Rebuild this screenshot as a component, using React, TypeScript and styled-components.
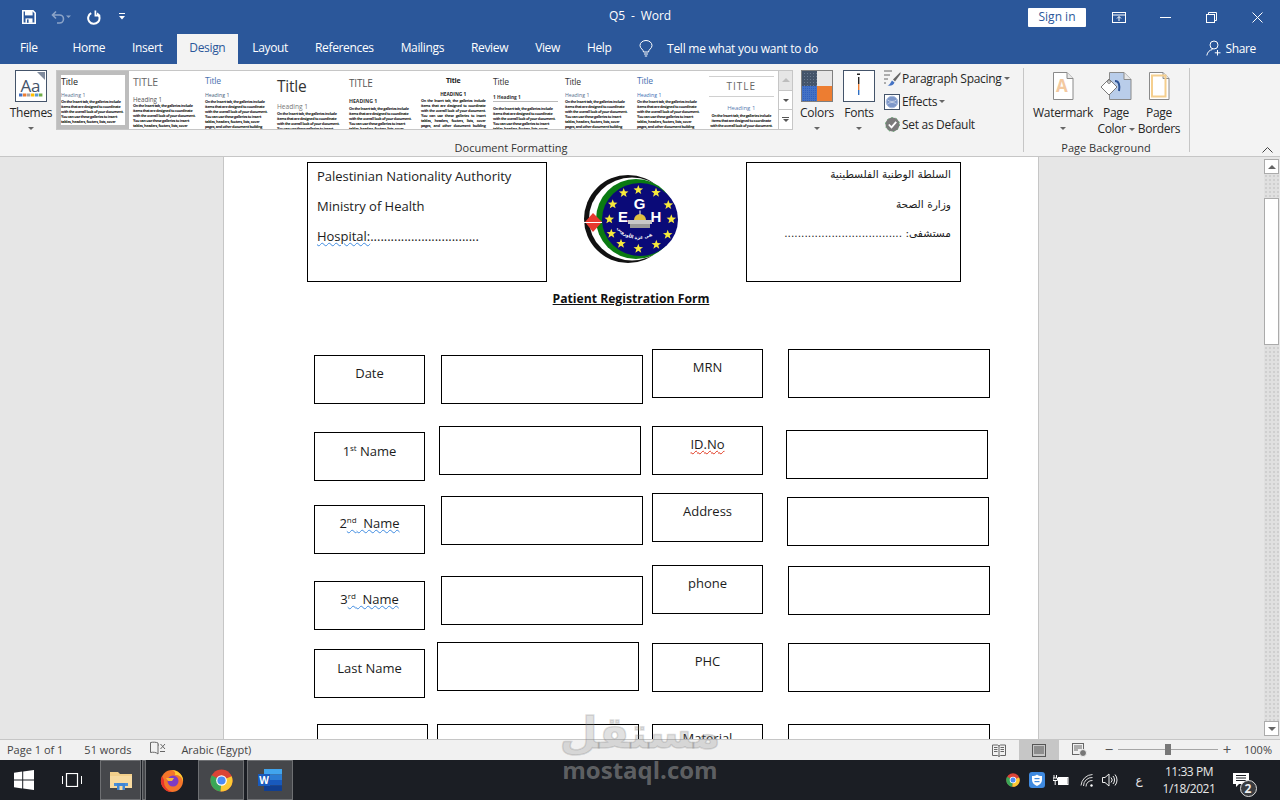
import React from "react";
import styled, { createGlobalStyle, css } from "styled-components";

const UI = `"Open Sans", "Noto Sans", sans-serif`;
const DOC = `"Open Sans", "Noto Sans", sans-serif`;
const AR = `"DejaVu Sans", sans-serif`;

const Global = createGlobalStyle`
  html, body { margin: 0; padding: 0; background: #fff; }
  body { font-family: ${UI}; }
  * { box-sizing: border-box; }
`;

const Root = styled.div`
  position: relative;
  width: 1280px;
  height: 800px;
  overflow: hidden;
  display: flex;
  flex-direction: column;
`;

/* ---------- title bar ---------- */
const TitleBar = styled.header`
  height: 34px;
  background: #2b579a;
  color: #fff;
  display: grid;
  grid-template-columns: 1fr auto 1fr;
  align-items: center;
`;
const QuickAccess = styled.div`
  display: flex;
  align-items: center;
  padding-left: 22px;
`;
const QuickIcon = styled.svg<{ $ml?: number; $dim?: boolean }>`
  display: block;
  margin-left: ${(p) => p.$ml ?? 0}px;
  opacity: ${(p) => (p.$dim ? 0.45 : 1)};
`;
const DocTitle = styled.div`
  font-size: 12px;
  letter-spacing: -0.1px;
  white-space: pre;
  padding: 0 0 3px 0;
`;
const WindowArea = styled.div`
  display: flex;
  justify-content: flex-end;
  align-items: center;
`;
const SignIn = styled.div`
  width: 58px;
  height: 19px;
  background: #fff;
  color: #2b579a;
  border-radius: 1px;
  font-size: 12px;
  line-height: 17px;
  text-align: center;
  margin-right: 10px;
`;
const WinButton = styled.div`
  width: 46px;
  height: 30px;
  display: flex;
  align-items: center;
  justify-content: center;
`;

/* ---------- tabs ---------- */
const TabRow = styled.nav`
  height: 30px;
  background: #2b579a;
  display: flex;
  align-items: stretch;
  padding-left: 6.5px;
  color: #fff;
`;
const Tab = styled.div<{ $active?: boolean; $file?: boolean }>`
  padding: 0 ${(p) => (p.$active ? 12.5 : 13.5)}px;
  margin-right: ${(p) => (p.$file ? 8 : 0)}px;
  font-size: 12px;
  letter-spacing: -0.35px;
  line-height: 28px;
  ${(p) =>
    p.$active &&
    css`
      background: #f3f3f3;
      color: #2b579a;
      margin: 0 1px;
    `}
`;
const TellMe = styled.div`
  display: flex;
  align-items: center;
  margin-left: 14px;
  padding-bottom: 2px;
  gap: 14px;
  font-size: 12px;
  letter-spacing: -0.25px;
`;
const ShareBox = styled.div`
  margin-left: auto;
  padding: 0 24px 2px 0;
  display: flex;
  align-items: center;
  gap: 3px;
  font-size: 12px;
  letter-spacing: -0.35px;
`;

/* ---------- ribbon ---------- */
const Ribbon = styled.section`
  height: 93px;
  background: #f3f3f3;
  border-bottom: 1px solid #c6c6c6;
  display: flex;
  color: #262626;
  font-size: 12px;
  letter-spacing: -0.3px;
`;
const Group = styled.div<{ $w: number }>`
  width: ${(p) => p.$w}px;
  height: 84px;
  margin-top: 4px;
  border-right: 1px solid #c6c6c6;
  display: flex;
  flex-direction: column;
`;
const GroupBody = styled.div<{ $pl: number }>`
  flex: 1;
  display: flex;
  padding: 2px 0 0 ${(p) => p.$pl}px;
`;
const GroupLabel = styled.div`
  text-align: center;
  font-size: 11px;
  letter-spacing: 0;
  line-height: 14px;
  margin-bottom: -3px;
  color: #333;
  padding-right: 1px;
`;
const BigButton = styled.div<{ $w: number; $ml?: number }>`
  width: ${(p) => p.$w}px;
  margin-left: ${(p) => p.$ml ?? 0}px;
  display: flex;
  flex-direction: column;
  align-items: center;
`;
const BigLabel = styled.div`
  margin-top: 3px;
  line-height: 16px;
  text-align: center;
  white-space: nowrap;
  & + & {
    margin-top: 0;
  }
`;
const Caret = styled.span<{ $color?: string }>`
  display: inline-block;
  width: 0;
  height: 0;
  border-left: 3px solid transparent;
  border-right: 3px solid transparent;
  border-top: 3px solid ${(p) => p.$color ?? "#666"};
  vertical-align: middle;
`;
const CaretLine = styled.div`
  height: 14px;
  display: flex;
  align-items: center;
  justify-content: center;
`;
const ThumbBox = styled.div`
  height: 32px;
  display: flex;
  align-items: center;
`;

const Gallery = styled.div`
  margin-left: 4px;
  width: 737px;
  height: 60px;
  background: #fff;
  border: 1px solid #c6c6c6;
  display: flex;
  overflow: hidden;
`;
const TileList = styled.div`
  flex: 1;
  display: flex;
  overflow: hidden;
`;
const Tile = styled.div<{ $sel?: boolean; $center?: boolean }>`
  flex: 0 0 72px;
  height: 58px;
  overflow: hidden;
  padding: 0 3.5px 0 4px;
  text-align: ${(p) => (p.$center ? "center" : "left")};
  color: #111;
  letter-spacing: 0;
  ${(p) =>
    p.$sel &&
    css`
      outline: 4px solid #bdbdbd;
      outline-offset: -4px;
      position: relative;
    `}
`;
const TileTitle = styled.div<{ $s: number; $c: string; $mt: number; $bold?: boolean; $spaced?: boolean; $ruled?: boolean }>`
  margin-top: ${(p) => p.$mt}px;
  font-size: ${(p) => p.$s}px;
  line-height: ${(p) => (p.$ruled ? 20 : p.$s >= 14 ? 18 : 10)}px;
  color: ${(p) => p.$c};
  font-weight: ${(p) => (p.$bold ? 700 : 400)};
  letter-spacing: ${(p) => (p.$spaced ? 1 : -0.2)}px;
  white-space: nowrap;
  ${(p) =>
    p.$ruled &&
    css`
      border-top: 1px solid #d0d0d0;
      border-bottom: 1px solid #d0d0d0;
      line-height: 19px;
    `}
`;
const TileHeading = styled.div<{ $s: number; $c: string; $mt: number; $bold?: boolean; $ruled?: boolean }>`
  margin-top: ${(p) => p.$mt}px;
  font-size: ${(p) => p.$s}px;
  line-height: 7px;
  color: ${(p) => p.$c};
  font-weight: ${(p) => (p.$bold ? 700 : 400)};
  white-space: nowrap;
  ${(p) => p.$ruled && `border-bottom: 1px solid #bbb;`}
`;
const TileBody = styled.div<{ $mt: number; $justify?: boolean }>`
  margin-top: ${(p) => p.$mt}px;
  font-size: 3.8px;
  letter-spacing: -0.33px;
  line-height: 5.1px;
  font-weight: 700;
  color: #111;
  text-align: ${(p) => (p.$justify ? "justify" : "inherit")};
`;
const GalleryScroll = styled.div`
  flex: 0 0 14px;
  display: flex;
  flex-direction: column;
  border-left: 1px solid #c6c6c6;
`;
const ScrollCell = styled.div<{ $off?: boolean }>`
  flex: 1;
  display: flex;
  flex-direction: column;
  gap: 1px;
  align-items: center;
  justify-content: center;
  background: ${(p) => (p.$off ? "#e6e6e6" : "#fff")};
  & + & {
    border-top: 1px solid #c6c6c6;
  }
`;
const UpCaret = styled.span`
  width: 0;
  height: 0;
  border-left: 4px solid transparent;
  border-right: 4px solid transparent;
  border-bottom: 4px solid #bdbdbd;
`;
const CaretBar = styled.span`
  width: 7px;
  height: 1px;
  background: #555;
`;
const OptionList = styled.div`
  margin: -3px 0 0 3px;
  display: flex;
  flex-direction: column;
`;
const OptionRow = styled.div`
  height: 23px;
  display: flex;
  align-items: center;
  gap: 2px;
  white-space: nowrap;
`;
const OptionIcon = styled.div`
  width: 18px;
  height: 18px;
  margin-right: -1px;
  display: flex;
  align-items: center;
  justify-content: center;
  flex: none;
`;
const CollapseArea = styled.div`
  flex: 1;
  display: flex;
  justify-content: flex-end;
  align-items: flex-end;
  padding: 0 7px 3px 0;
`;

/* ---------- document ---------- */
const DocArea = styled.main`
  height: 582px;
  background: #e6e6e6;
  display: grid;
  grid-template-columns: 223px 816px 1fr 17px;
  overflow: hidden;
`;
const Page = styled.div`
  grid-column: 2;
  position: relative;
  background: #fff;
  border-left: 1px solid #c6c6c6;
  border-right: 1px solid #c6c6c6;
  overflow: hidden;
  font-family: ${DOC};
  font-size: 13px;
  letter-spacing: -0.02px;
  color: #1c1c1c;
  padding-top: 134px;
`;
const FormTitle = styled.h1`
  margin: 0;
  text-align: center;
  font-size: 12.2px;
  line-height: 16px;
  font-weight: 700;
  text-decoration: underline;
  color: #111;
`;
const Floating = styled.div<{ $x: number; $y: number; $w: number; $h: number }>`
  position: absolute;
  left: ${(p) => p.$x - 224}px;
  top: ${(p) => p.$y - 157}px;
  width: ${(p) => p.$w}px;
  height: ${(p) => p.$h}px;
`;
const FormBox = styled(Floating)<{ $pt: number }>`
  border: 1px solid #000;
  text-align: center;
  line-height: 18px;
  padding-top: ${(p) => p.$pt}px;
`;
const HeaderLeft = styled(Floating)`
  border: 1px solid #000;
  padding: 4px 9px;
  line-height: 18px;
  display: flex;
  flex-direction: column;
  gap: 12px;
`;
const HeaderRight = styled(Floating)`
  border: 1px solid #000;
  padding: 2px 9px;
  direction: rtl;
  font-family: ${AR};
  font-size: 10.6px;
  letter-spacing: 0;
  line-height: 18px;
  display: flex;
  flex-direction: column;
  gap: 11.5px;
  white-space: nowrap;
`;
const LogoSlot = styled(Floating)``;
const Squiggle = styled.span<{ $red?: boolean }>`
  text-decoration: underline wavy ${(p) => (p.$red ? "#e0341c" : "#3f8be0")};
  text-decoration-thickness: 1px;
  text-underline-offset: 1px;
`;
const Sup = styled.sup`
  font-size: 8px;
  line-height: 0;
`;

/* ---------- scrollbar ---------- */
const ScrollBar = styled.div`
  grid-column: 4;
  display: flex;
  flex-direction: column;
  padding: 2px 1px 3px;
`;
const ScrollButton = styled.div`
  height: 15px;
  background: #fff;
  border: 1px solid #ababab;
  display: flex;
  align-items: center;
  justify-content: center;
  flex: none;
`;
const ScrollTrack = styled.div`
  flex: 1;
  padding-top: 24px;
  background-color: #e0e0e0;
  background-image: radial-gradient(#cfcfcf 1px, transparent 1px);
  background-size: 4px 4px;
`;
const ScrollThumb = styled.div`
  height: 147px;
  background: #fff;
  border: 1px solid #ababab;
`;
const Tri = styled.span<{ $down?: boolean }>`
  width: 0;
  height: 0;
  border-left: 4px solid transparent;
  border-right: 4px solid transparent;
  ${(p) => (p.$down ? "border-top" : "border-bottom")}: 4px solid #666;
`;

/* ---------- status bar ---------- */
const StatusBar = styled.footer`
  height: 21px;
  background: #f1f1f1;
  border-top: 1px solid #c6c6c6;
  display: flex;
  align-items: center;
  padding: 0 8px 2px 7px;
  font-size: 11px;
  letter-spacing: 0;
  color: #444;
`;
const StatusText = styled.span<{ $ml?: number }>`
  margin-left: ${(p) => p.$ml ?? 0}px;
  white-space: nowrap;
`;
const StatusRight = styled.div`
  margin-left: auto;
  height: 100%;
  display: flex;
  align-items: center;
`;
const ViewGroup = styled.div`
  height: 21px;
  margin: 0 4px -2px 0;
  display: flex;
`;
const ViewButton = styled.div<{ $on?: boolean; $w: number }>`
  width: ${(p) => p.$w}px;
  height: 100%;
  display: flex;
  align-items: center;
  justify-content: center;
  background: ${(p) => (p.$on ? "#c6c6c6" : "transparent")};
`;
const ZoomTrack = styled.div`
  position: relative;
  width: 100px;
  height: 1px;
  background: #a6a6a6;
  margin: 0 3px;
`;
const ZoomThumb = styled.div`
  position: absolute;
  left: 47px;
  top: -5px;
  width: 6px;
  height: 11px;
  background: #777;
`;
const ZoomMark = styled.div`
  width: 12px;
  text-align: center;
  font-size: 15px;
  line-height: 15px;
  color: #555;
`;

/* ---------- taskbar ---------- */
const Taskbar = styled.footer`
  height: 40px;
  background: #1b1e24;
  display: flex;
  align-items: stretch;
  color: #e8e8e8;
`;
const TaskSlot = styled.div<{ $w: number; $ml?: number; $active?: boolean }>`
  width: ${(p) => p.$w}px;
  margin-left: ${(p) => p.$ml ?? 0}px;
  display: flex;
  align-items: center;
  justify-content: center;
  ${(p) =>
    p.$active &&
    css`
      background: #45474b;
      border: 1px solid #6e7073;
    `}
`;
const Tray = styled.div`
  margin-left: auto;
  display: flex;
  align-items: center;
`;
const TrayIcon = styled.div<{ $w: number; $ml?: number }>`
  width: ${(p) => p.$w}px;
  margin-left: ${(p) => p.$ml ?? 0}px;
  height: 100%;
  display: flex;
  align-items: center;
  justify-content: center;
`;
const ImeGlyph = styled.div`
  width: 20px;
  margin-left: 11px;
  text-align: center;
  font-family: ${AR};
  font-size: 12px;
`;
const Clock = styled.div`
  width: 76px;
  margin-left: 2px;
  text-align: center;
  font-size: 12px;
  line-height: 17px;
  letter-spacing: -0.45px;
`;
const NotifyWrap = styled.div`
  position: relative;
  width: 45px;
  height: 40px;
  margin-right: 8px;
`;
const NotifyGlyph = styled.svg`
  position: absolute;
  left: 6px;
  top: 13px;
`;
const NotifyBadge = styled.div`
  position: absolute;
  left: 12.5px;
  top: 20px;
  width: 17px;
  height: 17px;
  border-radius: 50%;
  background: #3a3c40;
  border: 1px solid #dcdcdc;
  color: #eee;
  font-size: 12px;
  font-weight: 700;
  line-height: 15px;
  text-align: center;
`;

/* ---------- watermark ---------- */
const WatermarkLogo = styled.div`
  position: absolute;
  left: 523px;
  top: 701px;
  width: 234px;
  text-align: center;
  font-family: ${AR};
  font-weight: 700;
  font-size: 44px;
  line-height: 64px;
  color: rgba(120, 120, 120, 0.24);
  -webkit-text-stroke: 1.5px rgba(120, 120, 120, 0.24);
  pointer-events: none;
`;
const WatermarkText = styled.div`
  position: absolute;
  left: 523px;
  top: 754px;
  width: 234px;
  text-align: center;
  font-family: "Open Sans", sans-serif;
  font-weight: 700;
  font-size: 24px;
  line-height: 32px;
  color: rgba(190, 190, 190, 0.42);
  pointer-events: none;
`;

/* ---------- data ---------- */
const BODY =
  "On the Insert tab, the galleries include items that are designed to coordinate with the overall look of your document. You can use these galleries to insert tables, headers, footers, lists, cover pages, and other document building blocks.";

type T = {
  t: string; ts: number; tc: string; tm: number; tb?: boolean; sp?: boolean; tr?: boolean;
  h: string; hs: number; hc: string; hm: number; hb?: boolean; hr?: boolean;
  bm: number; sel?: boolean; center?: boolean; just?: boolean; ct?: boolean;
};
const tiles: T[] = [
  { t: "Title", ts: 9, tc: "#222", tm: 6, h: "Heading 1", hs: 5.2, hc: "#5a6f8f", hm: 4.5, bm: 0, sel: true },
  { t: "TITLE", ts: 10.5, tc: "#666", tm: 6, h: "Heading 1", hs: 6.2, hc: "#555", hm: 8.5, bm: 0 },
  { t: "Title", ts: 8.6, tc: "#4a72b0", tm: 5, h: "Heading 1", hs: 5.2, hc: "#4a5f80", hm: 5.5, bm: 0 },
  { t: "Title", ts: 15.5, tc: "#333", tm: 6, h: "Heading 1", hs: 6.6, hc: "#777", hm: 7.5, bm: 1 },
  { t: "TITLE", ts: 10, tc: "#555", tm: 7, h: "HEADING 1", hs: 5.2, hc: "#333", hm: 9.5, hb: true, bm: 1 },
  { t: "Title", ts: 7, tc: "#222", tm: 5, tb: true, ct: true, h: "HEADING 1", hs: 4.8, hc: "#222", hm: 4.5, hb: true, bm: 0, just: true },
  { t: "Title", ts: 8.6, tc: "#333", tm: 6, h: "1   Heading 1", hs: 4.8, hc: "#333", hm: 6.5, hb: true, hr: true, bm: 4 },
  { t: "Title", ts: 8.6, tc: "#333", tm: 6, h: "Heading 1", hs: 5.2, hc: "#5a6f8f", hm: 4.5, bm: 0 },
  { t: "Title", ts: 8.6, tc: "#4a72b0", tm: 5, h: "Heading 1", hs: 5.2, hc: "#3f6fb5", hm: 5.5, bm: 0 },
  { t: "TITLE", ts: 10, tc: "#666", tm: 5, sp: true, tr: true, h: "Heading 1", hs: 6, hc: "#5b7db1", hm: 7.5, bm: 1, center: true },
];

type B = { x: number; y: number; w?: number; pt?: number; label?: React.ReactNode };
const fw = 111;
const bw = 202;
const boxes: B[] = [
  { x: 314, y: 355, w: fw, label: "Date" },
  { x: 441, y: 355 },
  { x: 652, y: 349, w: fw, label: "MRN" },
  { x: 788, y: 349 },
  { x: 314, y: 432, w: fw, pt: 9, label: <>1<Sup>st</Sup> Name</> },
  { x: 439, y: 426 },
  { x: 652, y: 426, w: fw, label: <Squiggle $red>ID.No</Squiggle> },
  { x: 786, y: 430 },
  { x: 314, y: 505, w: fw, label: <>2<Squiggle><Sup>nd</Sup>&nbsp; Name</Squiggle></> },
  { x: 441, y: 496 },
  { x: 652, y: 493, w: fw, label: "Address" },
  { x: 787, y: 497 },
  { x: 314, y: 581, w: fw, label: <>3<Squiggle><Sup>rd</Sup>&nbsp; Name</Squiggle></> },
  { x: 441, y: 576 },
  { x: 652, y: 565, w: fw, label: "phone" },
  { x: 788, y: 566 },
  { x: 314, y: 649, w: fw, pt: 9, label: "Last Name" },
  { x: 437, y: 642 },
  { x: 652, y: 643, w: fw, label: "PHC" },
  { x: 788, y: 643 },
  { x: 317, y: 724, w: fw },
  { x: 437, y: 724 },
  { x: 652, y: 724, w: fw, pt: 4, label: "Material" },
  { x: 788, y: 724 },
];

/* ---------- drawings ---------- */
const DocShape = ({ children }: { children?: React.ReactNode }) => (
  <>
    <path d="M1.5 .5H15L21 6.5V27.5H1.5Z" fill="#fff" stroke="#8a8a8a" />
    <path d="M15 .5V6.5H21" fill="#e8e8e8" stroke="#8a8a8a" />
    {children}
  </>
);

const ChromeIcon = ({ size }: { size: number }) => (
  <svg width={size} height={size} viewBox="0 0 24 24">
    <circle cx="12" cy="12" r="11.5" fill="#db4437" />
    <path d="M12 12L1.8 6.5A11.5 11.5 0 0 0 11 23.5Z" fill="#3aa757" />
    <path d="M12 12L22.6 7.5A11.5 11.5 0 0 1 11 23.5Z" fill="#fcc934" />
    <circle cx="12" cy="12" r="5.6" fill="#fff" />
    <circle cx="12" cy="12" r="4.3" fill="#4c8bf5" />
  </svg>
);

const star = (cx: number, cy: number, r: number) => {
  const pts: string[] = [];
  for (let i = 0; i < 10; i++) {
    const a = -Math.PI / 2 + (i * Math.PI) / 5;
    const rr = i % 2 ? r * 0.42 : r;
    pts.push(`${(cx + rr * Math.cos(a)).toFixed(2)},${(cy + rr * Math.sin(a)).toFixed(2)}`);
  }
  return pts.join(" ");
};
const starSpots = [
  [98.3, 30], [116, 32.7], [128.3, 45], [131.3, 59.3], [127.7, 74.7], [116.3, 84.7],
  [98.3, 88.7], [81, 83.7], [71.3, 73.7], [69.3, 59.3], [72.7, 44.3], [83.7, 33],
];

const Logo = () => (
  <svg width="180" height="115" viewBox="0 0 180 115">
    <ellipse cx="88" cy="59" rx="44" ry="44" fill="#111" />
    <ellipse cx="92" cy="59" rx="43" ry="41.5" fill="#fff" />
    <ellipse cx="96" cy="59" rx="40" ry="40" fill="#0a7a12" />
    <ellipse cx="100" cy="59.5" rx="38" ry="36.5" fill="#0a0a78" />
    <path d="M53 53L62 62L53 72L45 62Z" fill="#e8392f" />
    <rect x="44" y="62" width="18" height="1" fill="#fff" />
    {starSpots.map(([x, y], i) => (
      <polygon key={i} points={star(x, y, 5)} fill="#f7e93c" />
    ))}
    <text x="99.5" y="49" textAnchor="middle" fontFamily="Liberation Sans, sans-serif" fontWeight="700" fontSize="15" fill="#fff">G</text>
    <text x="83" y="62" textAnchor="middle" fontFamily="Liberation Sans, sans-serif" fontWeight="700" fontSize="15" fill="#fff">E</text>
    <text x="116" y="62" textAnchor="middle" fontFamily="Liberation Sans, sans-serif" fontWeight="700" fontSize="15" fill="#fff">H</text>
    <path d="M94 60a6 6 0 0 1 12 0Z" fill="#e0c040" />
    <rect x="99.4" y="50.5" width="1.2" height="4" fill="#ddd" />
    <rect x="88" y="60" width="24" height="4" fill="#c8c8c8" />
    <rect x="90" y="64" width="20" height="4" fill="#9a9a9a" />
    <path id="egh-arc" d="M76 67Q90 86 114 75" fill="none" />
    <text fontFamily={AR} fontSize="4.6" fill="#fff" fontWeight="700">
      <textPath href="#egh-arc" startOffset="3%">مستشفى غزة الأوروبي</textPath>
    </text>
  </svg>
);

const WinLogo = () => (
  <svg width="20" height="20" viewBox="0 0 20 20" fill="#fff">
    <path d="M0 2.8L8.2 1.6V9.4H0ZM9.2 1.5L20 0V9.4H9.2ZM0 10.4H8.2V18.4L0 17.2ZM9.2 10.4H20V20L9.2 18.5Z" />
  </svg>
);

export default function App() {
  return (
    <Root>
      <Global />
      <TitleBar>
        <QuickAccess>
          <QuickIcon width="14" height="14" viewBox="0 0 14 14" fill="none">
            <path d="M.8.8H11L13.2 3V13.2H.8Z" stroke="#fff" strokeWidth="1.6" />
            <rect x="3" y="1" width="7.6" height="4.4" fill="#fff" />
            <rect x="3.5" y="8.4" width="7" height="4.4" fill="#fff" />
            <rect x="5" y="9.4" width="1.6" height="3.4" fill="#2b579a" />
          </QuickIcon>
          <QuickIcon $ml={15} $dim width="20" height="14" viewBox="0 0 20 14" fill="none">
            <path d="M5 1.5L1.5 5L5 8.5M1.5 5H8.5A4 4 0 0 1 8.5 13H6" stroke="#fff" strokeWidth="1.6" />
            <path d="M15 5.5h5l-2.5 2.5Z" fill="#fff" />
          </QuickIcon>
          <QuickIcon $ml={16} width="14" height="15" viewBox="0 0 14 15" fill="none">
            <path d="M4.2 3.1A5.7 5.7 0 1 0 10 3.4" stroke="#fff" strokeWidth="2" />
            <path d="M8.4.4V5.6H13.2" stroke="#fff" strokeWidth="1.7" fill="none" />
          </QuickIcon>
          <QuickIcon $ml={17} width="8" height="8" viewBox="0 0 8 8">
            <rect x="1" y="0" width="6" height="1" fill="#fff" />
            <path d="M1 3H7L4 6.5Z" fill="#fff" />
          </QuickIcon>
        </QuickAccess>
        <DocTitle>Q5  -  Word</DocTitle>
        <WindowArea>
          <SignIn>Sign in</SignIn>
          <WinButton>
            <svg width="14" height="11" viewBox="0 0 14 11" fill="none" stroke="#fff">
              <rect x=".5" y=".5" width="13" height="10" />
              <path d="M.5 3H13.5" />
              <path d="M7 9V4.5M5 6.5L7 4.5L9 6.5" />
            </svg>
          </WinButton>
          <WinButton>
            <svg width="11" height="1" viewBox="0 0 11 1"><rect width="11" height="1" fill="#fff" /></svg>
          </WinButton>
          <WinButton>
            <svg width="11" height="11" viewBox="0 0 11 11" fill="none" stroke="#fff">
              <rect x=".5" y="2.5" width="8" height="8" />
              <path d="M2.5 2.5V.5H10.5V8.5H8.5" />
            </svg>
          </WinButton>
          <WinButton>
            <svg width="11" height="11" viewBox="0 0 11 11" fill="none" stroke="#fff">
              <path d="M.5.5L10.5 10.5M10.5.5L.5 10.5" />
            </svg>
          </WinButton>
        </WindowArea>
      </TitleBar>

      <TabRow>
        <Tab $file>File</Tab>
        <Tab>Home</Tab>
        <Tab>Insert</Tab>
        <Tab $active>Design</Tab>
        <Tab>Layout</Tab>
        <Tab>References</Tab>
        <Tab>Mailings</Tab>
        <Tab>Review</Tab>
        <Tab>View</Tab>
        <Tab>Help</Tab>
        <TellMe>
          <svg width="14" height="17" viewBox="0 0 14 17" fill="none" stroke="#fff">
            <path d="M4.5 12C4.5 9.5 1 8.5 1 5.5A6 5 0 0 1 13 5.5C13 8.5 9.5 9.5 9.5 12Z" />
            <path d="M5 14H9M5.8 16H8.2" />
          </svg>
          Tell me what you want to do
        </TellMe>
        <ShareBox>
          <svg width="16" height="16" viewBox="0 0 16 16" fill="none" stroke="#fff">
            <circle cx="8" cy="5" r="4" />
            <path d="M.8 15.5C1.5 12 3.5 10 6.5 9.5M11.5 10V15.5M8.8 12.8H14.5" />
          </svg>
          Share
        </ShareBox>
      </TabRow>

      <Ribbon>
        <Group $w={1024}>
          <GroupBody $pl={10}>
            <BigButton $w={42}>
              <svg width="32" height="32" viewBox="0 0 32 32">
                <rect x=".5" y=".5" width="31" height="31" fill="#fff" stroke="#44546a" />
                <path d="M22 2H30V10Z" fill="#7f8a9c" />
                <text x="5.5" y="21.5" fontFamily="Open Sans, sans-serif" fontSize="17" fill="#44546a">Aa</text>
                {["#4472c4", "#ed7d31", "#a5a5a5", "#ffc000", "#5b9bd5", "#70ad47"].map((c, i) => (
                  <rect key={c} x={4 + i * 4} y="23.5" width="3.4" height="3" fill={c} />
                ))}
              </svg>
              <BigLabel>Themes</BigLabel>
              <CaretLine><Caret /></CaretLine>
            </BigButton>
            <Gallery>
              <TileList>
                {tiles.map((t, i) => (
                  <Tile key={i} $sel={t.sel} $center={t.center || t.ct}>
                    <TileTitle $s={t.ts} $c={t.tc} $mt={t.tm} $bold={t.tb} $spaced={t.sp} $ruled={t.tr}>{t.t}</TileTitle>
                    <TileHeading $s={t.hs} $c={t.hc} $mt={t.hm} $bold={t.hb} $ruled={t.hr}>{t.h}</TileHeading>
                    <TileBody $mt={t.bm} $justify={t.just}>{BODY}</TileBody>
                  </Tile>
                ))}
              </TileList>
              <GalleryScroll>
                <ScrollCell $off><UpCaret /></ScrollCell>
                <ScrollCell><Caret $color="#555" /></ScrollCell>
                <ScrollCell><CaretBar /><Caret $color="#555" /></ScrollCell>
              </GalleryScroll>
            </Gallery>
            <BigButton $w={42} $ml={3}>
              <ThumbBox>
                <svg width="32" height="32" viewBox="0 0 32 32">
                  <defs>
                    <pattern id="dotDark" width="3" height="3" patternUnits="userSpaceOnUse">
                      <rect width="3" height="3" fill="#44546a" />
                      <rect width="1" height="1" fill="#6b7a90" />
                    </pattern>
                    <pattern id="dotBlue" width="2" height="2" patternUnits="userSpaceOnUse">
                      <rect width="2" height="2" fill="#4472c4" />
                      <rect width="1" height="1" fill="#2f5fc0" />
                    </pattern>
                  </defs>
                  <rect width="16" height="16" fill="url(#dotDark)" />
                  <rect x="16" width="16" height="16" fill="#e7e6e6" />
                  <rect y="16" width="16" height="16" fill="url(#dotBlue)" />
                  <rect x="16" y="16" width="16" height="16" fill="#ed7d31" />
                  <rect x=".5" y=".5" width="31" height="31" fill="none" stroke="#7f7f7f" />
                </svg>
              </ThumbBox>
              <BigLabel>Colors</BigLabel>
              <CaretLine><Caret /></CaretLine>
            </BigButton>
            <BigButton $w={42}>
              <ThumbBox>
                <svg width="32" height="32" viewBox="0 0 32 32">
                  <rect x=".5" y=".5" width="31" height="31" fill="#fff" stroke="#44546a" />
                  <path d="M14 3.5H17V5H14Z" fill="#222" />
                  <rect x="15" y="7" width="1.4" height="7" fill="#222" />
                  <rect x="15" y="14" width="1.4" height="6" fill="#ed7d31" />
                  <rect x="15" y="20" width="1.4" height="5" fill="#2f6fc4" />
                </svg>
              </ThumbBox>
              <BigLabel>Fonts</BigLabel>
              <CaretLine><Caret /></CaretLine>
            </BigButton>
            <OptionList>
              <OptionRow>
                <OptionIcon>
                  <svg width="17" height="17" viewBox="0 0 17 17" fill="none">
                    <path d="M0 1H8M0 5H6M0 9H4M0 13H2" stroke="#666" />
                    <path d="M16.5 2L9 9.5L11 11.5L16.5 4Z" fill="#666" />
                    <path d="M8 10.5L10.5 12.5C9.5 15.5 6.5 16 3.5 15.5C6 15 6.5 12.5 8 10.5Z" fill="#4472c4" />
                  </svg>
                </OptionIcon>
                <span>Paragraph Spacing</span>
                <Caret />
              </OptionRow>
              <OptionRow>
                <OptionIcon>
                  <svg width="16" height="16" viewBox="0 0 16 16">
                    <rect x=".5" y=".5" width="15" height="15" fill="#fff" stroke="#44546a" />
                    <circle cx="8" cy="8" r="5.8" fill="#7d97c9" stroke="#a9bbdc" />
                    <path d="M3.5 6C6 8 10 8 12.5 6M3.5 10C6 8 10 8 12.5 10" stroke="#c3cfe6" fill="none" />
                  </svg>
                </OptionIcon>
                <span>Effects</span>
                <Caret />
              </OptionRow>
              <OptionRow>
                <OptionIcon>
                  <svg width="15" height="15" viewBox="0 0 15 15">
                    <circle cx="7.5" cy="7.5" r="7" fill="#7a7a7a" />
                    <circle cx="7.5" cy="7.5" r="7" fill="none" stroke="#5aa469" strokeDasharray="1.5 3" />
                    <path d="M3.8 7.5L6.5 10.4L11.2 4.8" stroke="#fff" strokeWidth="1.8" fill="none" />
                  </svg>
                </OptionIcon>
                <span>Set as Default</span>
              </OptionRow>
            </OptionList>
          </GroupBody>
          <GroupLabel>Document Formatting</GroupLabel>
        </Group>

        <Group $w={166}>
          <GroupBody $pl={9}>
            <BigButton $w={60}>
              <ThumbBox>
                <svg width="22" height="28" viewBox="0 0 22 28">
                  <DocShape>
                    <text x="4" y="20" fontFamily="Open Sans, sans-serif" fontSize="17" fill="#f3c9a0" fontWeight="700">A</text>
                  </DocShape>
                </svg>
              </ThumbBox>
              <BigLabel>Watermark</BigLabel>
              <CaretLine><Caret /></CaretLine>
            </BigButton>
            <BigButton $w={42} $ml={2}>
              <ThumbBox>
                <svg width="32" height="28" viewBox="0 0 32 28" fill="none">
                  <path d="M9.5.5H24L31 7.5V27.5H9.5Z" fill="#b9cdea" stroke="#8a8a8a" />
                  <path d="M24 .5V7.5H31" fill="#e8e8e8" stroke="#8a8a8a" />
                  <path d="M1 15L9 7L17 15L9 23Z" fill="#fff" stroke="#7a7a7a" />
                  <circle cx="9" cy="10" r="1.4" stroke="#7a7a7a" />
                  <path d="M15 9C19 9 20 13 19 19" stroke="#2f5597" strokeWidth="2" />
                </svg>
              </ThumbBox>
              <BigLabel>Page</BigLabel>
              <BigLabel>Color <Caret /></BigLabel>
            </BigButton>
            <BigButton $w={42} $ml={1}>
              <ThumbBox>
                <svg width="22" height="28" viewBox="0 0 22 28" fill="none">
                  <DocShape>
                    <rect x="4" y="3.5" width="13.5" height="21" stroke="#f5cf8e" strokeWidth="2" />
                  </DocShape>
                </svg>
              </ThumbBox>
              <BigLabel>Page</BigLabel>
              <BigLabel>Borders</BigLabel>
            </BigButton>
          </GroupBody>
          <GroupLabel>Page Background</GroupLabel>
        </Group>
        <CollapseArea>
          <svg width="11" height="6" viewBox="0 0 11 6" fill="none" stroke="#444">
            <path d="M.5 5.5L5.5.5L10.5 5.5" />
          </svg>
        </CollapseArea>
      </Ribbon>

      <DocArea>
        <Page>
          <FormTitle>Patient Registration Form</FormTitle>
          <HeaderLeft $x={307} $y={162} $w={240} $h={120}>
            <div>Palestinian Nationality Authority</div>
            <div>Ministry of Health</div>
            <div><Squiggle>Hospital:</Squiggle>................................</div>
          </HeaderLeft>
          <LogoSlot $x={540} $y={160} $w={180} $h={115}><Logo /></LogoSlot>
          <HeaderRight $x={746} $y={162} $w={215} $h={120}>
            <div>السلطة الوطنية الفلسطينية</div>
            <div>وزارة الصحة</div>
            <div>مستشفى: ...................................</div>
          </HeaderRight>
          {boxes.map((b, i) => (
            <FormBox key={i} $x={b.x} $y={b.y} $w={b.w ?? bw} $h={49} $pt={b.pt ?? 8}>{b.label}</FormBox>
          ))}
        </Page>
        <ScrollBar>
          <ScrollButton><Tri /></ScrollButton>
          <ScrollTrack><ScrollThumb /></ScrollTrack>
          <ScrollButton><Tri $down /></ScrollButton>
        </ScrollBar>
      </DocArea>

      <StatusBar>
        <StatusText>Page 1 of 1</StatusText>
        <StatusText $ml={21}>51 words</StatusText>
        <StatusText $ml={19}>
          <svg width="16" height="14" viewBox="0 0 16 14" fill="none" stroke="#666">
            <path d="M8 2V13M8 2C6 1 3 1 .5 1.5V11.5C3 11 6 11 8 13M8 4H9" />
            <path d="M10.5 3L15 8M15 3L10.5 8" />
            <path d="M10 10.5H15" />
          </svg>
        </StatusText>
        <StatusText $ml={15}>Arabic (Egypt)</StatusText>
        <StatusRight>
          <ViewGroup>
            <ViewButton $w={40}>
              <svg width="14" height="13" viewBox="0 0 14 13" fill="none" stroke="#666">
                <path d="M7 2V12.5M.5 1H5.5L7 2L8.5 1H13.5V11.5H8.5L7 12.5L5.5 11.5H.5Z" />
                <path d="M2 3.5H5.5M2 5.5H5.5M2 7.5H5.5M8.5 3.5H12M8.5 5.5H12M8.5 7.5H12" />
              </svg>
            </ViewButton>
            <ViewButton $w={40} $on>
              <svg width="14" height="13" viewBox="0 0 14 13" fill="none" stroke="#555">
                <rect x=".5" y=".5" width="13" height="12" />
                <path d="M2 3H12M2 5H12M2 7H12M2 9H12" />
              </svg>
            </ViewButton>
            <ViewButton $w={40}>
              <svg width="15" height="14" viewBox="0 0 15 14" fill="none" stroke="#666">
                <rect x=".5" y=".5" width="11" height="11" />
                <path d="M2 3H10M2 5H10M2 7H6" />
                <circle cx="11" cy="10" r="3.5" fill="#777" stroke="#f1f1f1" />
              </svg>
            </ViewButton>
          </ViewGroup>
          <ZoomMark>−</ZoomMark>
          <ZoomTrack><ZoomThumb /></ZoomTrack>
          <ZoomMark>+</ZoomMark>
          <StatusText $ml={11}>100%</StatusText>
        </StatusRight>
      </StatusBar>

      <Taskbar>
        <TaskSlot $w={48}><WinLogo /></TaskSlot>
        <TaskSlot $w={48}>
          <svg width="20" height="14" viewBox="0 0 20 14" fill="none" stroke="#fff">
            <rect x="4.5" y=".5" width="11" height="13" strokeWidth="1.2" />
            <path d="M.5 3V11M19.5 3V11" />
          </svg>
        </TaskSlot>
        <TaskSlot $w={41} $ml={4} $active>
          <svg width="22" height="20" viewBox="0 0 22 20">
            <path d="M0 2H8L10 4H22V18H0Z" fill="#f3d08b" />
            <rect y="6" width="22" height="12" fill="#f8dba0" />
            <rect x="4" y="13" width="14" height="3" fill="#4a90d9" />
            <rect x="7" y="13" width="8" height="7" fill="#3f86d6" />
            <rect x="9.5" y="16" width="3" height="4" fill="#f8dba0" />
          </svg>
        </TaskSlot>
        <TaskSlot $w={4} $ml={1} $active />
        <TaskSlot $w={52}>
          <svg width="24" height="24" viewBox="0 0 24 24">
            <circle cx="12" cy="13" r="11" fill="#f4762a" />
            <path d="M12 2C20 3 24 9 23 14C22 7 17 7 15 7C16 4 14 3 12 2Z" fill="#ffcb30" />
            <path d="M2 8A11 11 0 0 0 12 24A11 11 0 0 1 4 12Z" fill="#e8352a" />
            <circle cx="13" cy="13" r="5.5" fill="#7e3cc2" />
            <path d="M6 10H14L12 13H8Z" fill="#f6b93a" />
          </svg>
        </TaskSlot>
        <TaskSlot $w={46} $active><ChromeIcon size={23} /></TaskSlot>
        <TaskSlot $w={46} $ml={3} $active>
          <svg width="24" height="22" viewBox="0 0 24 22">
            <rect x="6" y="0" width="18" height="5.5" fill="#41a5ee" />
            <rect x="6" y="5.5" width="18" height="5.5" fill="#2b7cd3" />
            <rect x="6" y="11" width="18" height="5.5" fill="#185abd" />
            <rect x="6" y="16.5" width="18" height="5.5" fill="#103f91" />
            <rect x="0" y="5" width="12" height="12" fill="#185abd" />
            <text x="6" y="14.5" textAnchor="middle" fontFamily="Open Sans, sans-serif" fontWeight="700" fontSize="10" fill="#fff">W</text>
          </svg>
        </TaskSlot>
        <Tray>
          <TrayIcon $w={14}><ChromeIcon size={14} /></TrayIcon>
          <TrayIcon $w={16} $ml={9}>
            <svg width="16" height="16" viewBox="0 0 16 16">
              <rect width="16" height="16" rx="3" fill="#3f8ae0" />
              <path d="M3 4C5 4 7 3.5 8 2.5C9 3.5 11 4 13 4V8C13 11 10.5 13 8 14C5.5 13 3 11 3 8Z" fill="#fff" />
              <rect x="5.5" y="6" width="5" height="1.2" fill="#3f8ae0" />
              <rect x="5.5" y="9" width="5" height="1.2" fill="#3f8ae0" />
            </svg>
          </TrayIcon>
          <TrayIcon $w={16} $ml={8}>
            <svg width="16" height="11" viewBox="0 0 16 11" fill="none" stroke="#fff">
              <path d="M1 0V3M3.5 0V3M0 3H4.5V5.5H0ZM2.2 5.5V10" />
              <rect x="5.5" y="2.5" width="9.5" height="7" />
              <rect x="6.5" y="3.5" width="7.5" height="5" fill="#fff" />
            </svg>
          </TrayIcon>
          <TrayIcon $w={14} $ml={11}>
            <svg width="14" height="13" viewBox="0 0 14 13" fill="none" stroke="#ddd">
              <path d="M1 11.5A12 12 0 0 1 12.5 .5M3.5 12A8.5 8.5 0 0 1 12.5 3.5M6 12.5A6 6 0 0 1 12.5 6.5" />
              <circle cx="11.5" cy="11.5" r="1.2" fill="#fff" stroke="none" />
            </svg>
          </TrayIcon>
          <TrayIcon $w={16} $ml={8}>
            <svg width="16" height="14" viewBox="0 0 16 14" fill="none" stroke="#eee">
              <path d="M.5 4.5H3L7 1V13L3 9.5H.5Z" />
              <path d="M9 4.5A3.5 3.5 0 0 1 9 9.5M11 3A6 6 0 0 1 11 11M13 1.5A8.5 8.5 0 0 1 13 12.5" />
            </svg>
          </TrayIcon>
          <ImeGlyph>ع</ImeGlyph>
          <Clock>
            <div>11:33 PM</div>
            <div>1/18/2021</div>
          </Clock>
          <NotifyWrap>
            <NotifyGlyph width="17" height="14" viewBox="0 0 17 14">
              <path d="M0 0H16V11H6L3 14V11H0Z" fill="#fff" />
              <path d="M3 2.5H13M3 5H13M3 7.5H13" stroke="#1b1e24" />
            </NotifyGlyph>
            <NotifyBadge>2</NotifyBadge>
          </NotifyWrap>
        </Tray>
      </Taskbar>

      <WatermarkLogo>مستقل</WatermarkLogo>
      <WatermarkText>mostaql.com</WatermarkText>
    </Root>
  );
}
